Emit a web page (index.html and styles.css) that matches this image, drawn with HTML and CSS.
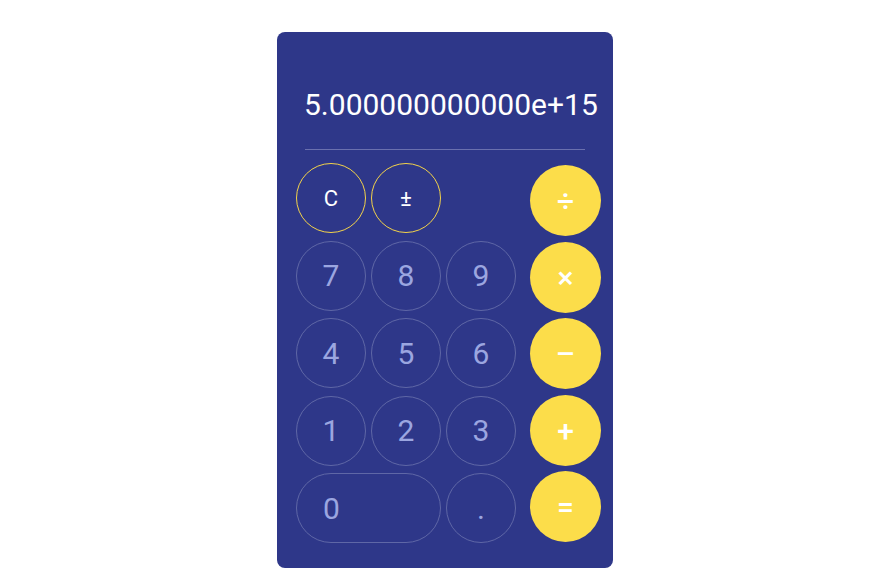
FILE: index.html
```html
<!DOCTYPE html>
<html lang="en">
<head>
<meta charset="utf-8">
<title>Calculator</title>
<link rel="stylesheet" href="styles.css">
</head>
<body>
<div class="page">
  <div class="calc">
    <div class="display">5.000000000000e+15</div>
    <div class="divider"></div>
    <div class="keypad">
      <div class="keys">
        <button class="key fn">C</button>
        <button class="key fn">±</button>
        <span class="blank"></span>
        <button class="key num">7</button>
        <button class="key num">8</button>
        <button class="key num">9</button>
        <button class="key num">4</button>
        <button class="key num">5</button>
        <button class="key num">6</button>
        <button class="key num">1</button>
        <button class="key num">2</button>
        <button class="key num">3</button>
        <button class="key num zero">0</button>
        <button class="key num">.</button>
      </div>
      <div class="ops">
        <button class="op">÷</button>
        <button class="op">×</button>
        <button class="op">–</button>
        <button class="op">+</button>
        <button class="op">=</button>
      </div>
    </div>
  </div>
</div>
</body>
</html>
```
FILE: styles.css
```css
* { box-sizing: border-box; }
html, body { margin: 0; padding: 0; background: #ffffff; }
body { font-family: Roboto, "Liberation Sans", sans-serif; }

.page {
  display: flex;
  justify-content: center;
  padding: 32px 0 0 8px;
}

.calc {
  width: 336px;
  height: 536px;
  background: #2e3789;
  border-radius: 8px;
  padding-top: 55px;
  overflow: hidden;
}

.display {
  padding: 0 27px;
  height: 35px;
  line-height: 35px;
  font-size: 30px;
  color: #ffffff;
  white-space: nowrap;
}

.divider {
  height: 1px;
  margin: 27px 28px 0;
  background: #6a70ae;
}

.keypad {
  display: flex;
  align-items: flex-start;
  margin-top: 13px;
  padding-left: 19px;
}

.keys {
  display: grid;
  grid-template-columns: repeat(3, 70px);
  grid-auto-rows: 70px;
  column-gap: 5px;
  row-gap: 7.5px;
}

.key {
  margin: 0;
  padding: 0;
  background: transparent;
  border-radius: 35px;
  font-family: Roboto, "Liberation Sans", sans-serif;
  display: flex;
  align-items: center;
  justify-content: center;
  cursor: pointer;
}

.fn {
  border: 1px solid #f3d34a;
  color: #ffffff;
  font-size: 22px;
}

.num {
  border: 1px solid #5f67a6;
  color: #9ba6e0;
  font-size: 30px;
}

.zero {
  grid-column: span 2;
  justify-content: flex-start;
  padding-left: 26px;
}

.ops {
  display: flex;
  flex-direction: column;
  gap: 5.5px;
  margin-left: 14px;
  margin-top: 2px;
}

.op {
  width: 71px;
  height: 71px;
  margin: 0;
  padding: 0;
  border: none;
  border-radius: 50%;
  background: #fcdd4a;
  color: #ffffff;
  font-family: Roboto, "Liberation Sans", sans-serif;
  font-size: 30px;
  font-weight: 500;
  display: flex;
  align-items: center;
  justify-content: center;
  cursor: pointer;
}
```
